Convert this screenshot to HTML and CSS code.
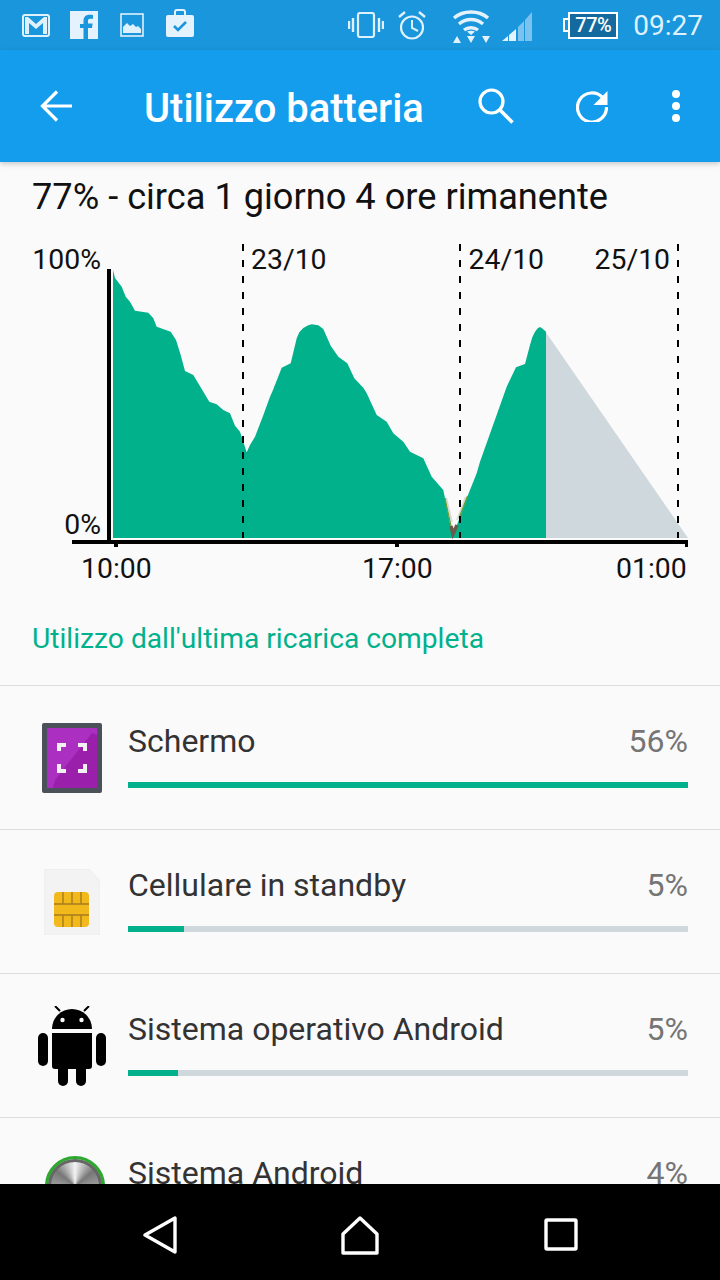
FILE: index.html
```html
<!DOCTYPE html>
<html lang="it">
<head>
    <meta charset="UTF-8">
    <meta name="viewport" content="width=device-width, initial-scale=1.0">
    <title>Utilizzo batteria</title>
    <link rel="stylesheet" href="styles.css">
</head>
<body>
    <div class="screen">
        <div class="status-bar">
            <div class="status-left">
                <svg class="ic-mail" width="28" height="23" viewBox="0 0 28 23"><rect x="1" y="1" width="26" height="21" rx="2" fill="none" stroke="#dff1fc" stroke-width="2"/><path d="M3 3h3l8 7 8-7h3v17h-4V9l-7 6-7-6v11H3z" fill="#dff1fc"/></svg>
                <svg class="ic-fb" width="28" height="28" viewBox="0 0 28 28"><rect width="28" height="28" fill="#e3f2fc"/><path d="M18 28V17h4l.6-4.400H18V10c0-1.300.4-2.200 2.200-2.200H23V4c-.5 0-2-.2-3.600-.2-3.500 0-5.900 2.100-5.900 6v3.200H10V17h3.500v11z" fill="#1a96dc"/></svg>
                <svg class="ic-pic" width="24" height="24" viewBox="0 0 24 24"><rect x="1" y="1" width="22" height="22" fill="none" stroke="#dff1fc" stroke-width="1.600"/><path d="M3 20v-6l4-4 3 3 3-2 3 3 2-1 3 3v4z" fill="#dff1fc"/></svg>
                <svg class="ic-bag" width="28" height="28" viewBox="0 0 28 28"><path d="M2 6h24a2 2 0 0 1 2 2v18a2 2 0 0 1-2 2H2a2 2 0 0 1-2-2V8a2 2 0 0 1 2-2z" fill="#e3f2fc"/><path d="M9 6V3a2 2 0 0 1 2-2h6a2 2 0 0 1 2 2v3" fill="none" stroke="#e3f2fc" stroke-width="2"/><path d="M8 17l4 4 8-8" fill="none" stroke="#1a96dc" stroke-width="2.600"/></svg>
            </div>
            <div class="status-right">
                <svg class="ic-vib" width="36" height="26" viewBox="0 0 36 26"><rect x="10" y="1" width="16" height="24" rx="2" fill="none" stroke="#dff1fc" stroke-width="2.200"/><path d="M5 6v14M1 9v8M31 6v14M35 9v8" stroke="#dff1fc" stroke-width="2.400"/></svg>
                <svg class="ic-alarm" width="28" height="29" viewBox="0 0 28 29"><circle cx="14" cy="16.500" r="11" fill="none" stroke="#dff1fc" stroke-width="2.200"/><path d="M14 9v8l6 3" fill="none" stroke="#dff1fc" stroke-width="2"/><path d="M1 6l6-5M27 6l-6-5" stroke="#dff1fc" stroke-width="2.400"/></svg>
                <svg class="ic-wifi" width="38" height="33" viewBox="0 0 38 33"><g fill="none" stroke="#e3f2fc" stroke-width="3.400"><path d="M2 8C11 0 27 0 36 8"/><path d="M7 14C14 8 24 8 31 14"/><path d="M12 20c4-3 10-3 14 0"/></g><path d="M15 21.500c2.500-1 5.500-1 8 0l-4 3.500zM1 33l4-7 4 7zM15 26h8l-4 7zM30 26h8l-4 7z" fill="#e3f2fc"/></svg>
                <svg class="ic-signal" width="30" height="29" viewBox="0 0 30 29"><path d="M0 29l6-5v5zM7 23l7-6v12H7z" fill="#e3f2fc"/><path d="M16 15l6-6v20h-6zM23 8l7-8v29h-7z" fill="#7cc2ee"/></svg>
                <div class="battery"><span class="battery-cap"></span><span class="battery-body">77%</span></div>
                <span class="clock">09:27</span>
            </div>
        </div>

        <header class="toolbar">
            <button class="tool-btn nav-btn" type="button"><svg width="32" height="32" viewBox="0 0 32 32"><path d="M32 16H3M17 1.500L2.500 16 17 30.500" fill="none" stroke="#fff" stroke-width="3.200"/></svg></button>
            <h1 class="title">Utilizzo batteria</h1>
            <button class="tool-btn" type="button"><svg width="36" height="36" viewBox="0 0 36 36"><circle cx="13.500" cy="13.500" r="11.500" fill="none" stroke="#fff" stroke-width="3.200"/><path d="M22 22l12.500 12.500" stroke="#fff" stroke-width="3.600"/></svg></button>
            <button class="tool-btn" type="button"><svg width="32" height="32" viewBox="0 0 32 32"><path d="M27 8A14.500 14.500 0 1 0 30.500 17" fill="none" stroke="#fff" stroke-width="3.200"/><path d="M31.500 1v14h-14z" fill="#fff"/></svg></button>
            <button class="tool-btn more-btn" type="button"><span class="dots"><i></i><i></i><i></i></span></button>
        </header>

        <main class="content">
            <p class="summary">77% - circa 1 giorno 4 ore rimanente</p>

            <svg class="chart" width="720" height="370" viewBox="0 232 720 370">
                <polygon fill="#cfd8dc" points="545,331 688,538 545,538"/>
                <polygon fill="#00b18c" points="113,270 115,278 121.700,286.700 125.700,296.700 130,301.700 135,310.700 148.300,312.700 153.300,318.300 156.700,326.700 170.700,331.700 176,340 180.700,355 185,371 193.300,375 201.700,389 209.300,401.700 216.700,404.300 223.300,410 230,413.300 235,425.700 240,431.700 246.700,452.300 250,445 255,436.700 263,416 270,396.700 273,390 281.700,367.700 290.700,363.300 296.700,338.300 299.300,332.300 303.300,328 308.300,325.300 311.700,324.300 318.300,325.300 323.300,329 326.700,336.700 330.700,345.700 338.300,356.700 347.300,363.300 354.300,378.300 363.300,387.700 366.700,393.300 376.700,415 386.700,421.700 393.300,433.300 403.300,441.700 410,451.700 423.300,458.300 431.700,476.700 443.300,490 445,498.300 452.700,536.700 467.300,496.700 476.700,473.300 480,461.700 506.700,386.700 516,367.300 525,364 530,345 532.300,337.300 535,331.700 537.700,328.300 540,327 542.700,328.700 546,331.700 546,538 113,538"/>
                <g fill="none">
                    <path d="M446.500 498L452 522" stroke="#d8d8d8" stroke-width="1.500"/>
                    <path d="M465.500 497L457 520" stroke="#d8d8d8" stroke-width="1.500"/>
                    <path d="M445 498L451 526" stroke="#6f9a2e" stroke-width="1.200"/>
                    <path d="M467.500 496L459 518" stroke="#6f9a2e" stroke-width="1.200"/>
                    <path d="M451 526L453 534L457 525" stroke="#6b5a4a" stroke-width="3.500"/>
                </g>
                <g class="dash">
                    <line x1="243" y1="244" x2="243" y2="538"/>
                    <line x1="460" y1="244" x2="460" y2="538"/>
                    <line x1="678" y1="244" x2="678" y2="538"/>
                </g>
                <rect x="107" y="269" width="4" height="275"/>
                <rect x="72" y="540" width="616" height="4"/>
                <rect x="114" y="544" width="4" height="3"/>
                <rect x="395" y="544" width="4" height="3"/>
                <rect x="685" y="544" width="3" height="3"/>
                <text x="101" y="269" text-anchor="end">100%</text>
                <text x="101" y="534" text-anchor="end">0%</text>
                <text x="251" y="269">23/10</text>
                <text x="468.500" y="269">24/10</text>
                <text x="594.500" y="269">25/10</text>
                <text x="81" y="578">10:00</text>
                <text x="362" y="578">17:00</text>
                <text x="616" y="578">01:00</text>
            </svg>

            <h2 class="section-title">Utilizzo dall'ultima ricarica completa</h2>

            <ul class="usage-list">
                <li class="usage-row">
                    <div class="usage-icon">
                        <svg width="60" height="70" viewBox="0 0 60 70">
                            <rect width="60" height="70" rx="2" fill="#4b5159"/>
                            <rect x="5" y="5" width="50" height="60" fill="#ab30c2"/>
                            <path d="M55 12l-5-2L13 57l-2 8h44z" fill="#9a1fab"/>
                            <path d="M17 28v-6h7M43 28v-6h-7M17 41v7h7M43 41v7h-7" fill="none" stroke="#f3f0f4" stroke-width="4"/>
                        </svg>
                    </div>
                    <div class="usage-info">
                        <div class="usage-line"><span>Schermo</span><span class="pct">56%</span></div>
                        <div class="track"><div class="fill" style="width: 100%"></div></div>
                    </div>
                </li>
                <li class="usage-row">
                    <div class="usage-icon">
                        <svg width="56" height="66" viewBox="0 0 56 66">
                            <path d="M0 0h45l11 12v54H0z" fill="#f3f3f3" stroke="#ececec"/>
                            <rect x="10" y="23" width="35" height="35" rx="4" fill="#f2b91c"/>
                            <path d="M19 23v12M28 23v12M37 23v12M19 46v12M28 46v12M37 46v12M10 35h35M10 46h35" fill="none" stroke="#a77c1c" stroke-width="1.400"/>
                        </svg>
                    </div>
                    <div class="usage-info">
                        <div class="usage-line"><span>Cellulare in standby</span><span class="pct">5%</span></div>
                        <div class="track"><div class="fill" style="width: 10%"></div></div>
                    </div>
                </li>
                <li class="usage-row">
                    <div class="usage-icon">
                        <svg width="68" height="80" viewBox="0 0 68 80">
                            <path d="M14 23a20 20 0 0 1 40 0z" fill="#000"/>
                            <path d="M22 5l-5-5M46 5l5-5" stroke="#000" stroke-width="2"/>
                            <circle cx="24.500" cy="14" r="2.200" fill="#fafafa"/>
                            <circle cx="43.500" cy="14" r="2.200" fill="#fafafa"/>
                            <path d="M14 27h40v33a3 3 0 0 1-3 3H17a3 3 0 0 1-3-3z" fill="#000"/>
                            <rect y="27" width="10" height="33" rx="5" fill="#000"/>
                            <rect x="58" y="27" width="10" height="33" rx="5" fill="#000"/>
                            <rect x="20" y="55" width="10" height="25" rx="5" fill="#000"/>
                            <rect x="38" y="55" width="10" height="25" rx="5" fill="#000"/>
                        </svg>
                    </div>
                    <div class="usage-info">
                        <div class="usage-line"><span>Sistema operativo Android</span><span class="pct">5%</span></div>
                        <div class="track"><div class="fill" style="width: 9%"></div></div>
                    </div>
                </li>
                <li class="usage-row">
                    <div class="usage-icon"><div class="knob"></div></div>
                    <div class="usage-info">
                        <div class="usage-line"><span>Sistema Android</span><span class="pct">4%</span></div>
                        <div class="track"><div class="fill" style="width: 8%"></div></div>
                    </div>
                </li>
            </ul>
        </main>

        <nav class="nav-bar">
            <svg width="36" height="38" viewBox="0 0 36 38"><path d="M3 19L33 2v34z" fill="none" stroke="#fff" stroke-width="3.400" stroke-linejoin="round"/></svg>
            <svg width="40" height="40" viewBox="0 0 40 40"><path d="M20 3l17 16v19H3V19z" fill="none" stroke="#fff" stroke-width="3.400" stroke-linejoin="round"/></svg>
            <svg class="nav-square" width="34" height="34" viewBox="0 0 34 34"><rect x="2" y="2" width="30" height="29" rx="1" fill="none" stroke="#fff" stroke-width="3.400"/></svg>
        </nav>
    </div>
</body>
</html>
```

FILE: styles.css
```css
* {
    box-sizing: border-box;
}

body {
    margin: 0;
    font-family: Roboto, "Noto Sans", sans-serif;
    background-color: #FAFAFA;
}

.screen {
    display: flex;
    flex-direction: column;
    width: 720px;
    height: 1280px;
    overflow: hidden;
}

/* status bar */
.status-bar {
    display: flex;
    flex: none;
    justify-content: space-between;
    align-items: center;
    height: 50px;
    padding: 0 17px 0 22px;
    background-color: #1A96DC;
}

.status-left,
.status-right {
    display: flex;
    align-items: center;
}

.status-left svg {
    display: block;
}

.ic-fb { margin-left: 20px; }
.ic-pic { margin-left: 22px; }
.ic-bag { margin: -4px 0 0 22px; }
.ic-alarm { margin-left: 14px; }
.ic-wifi { margin: 2px 0 0 26px; }
.ic-signal { margin: 3px 0 0 12px; }

.battery {
    display: flex;
    align-items: center;
    margin-left: 31px;
}

.battery-cap {
    width: 5px;
    height: 14px;
    border: 2px solid #FFFFFF;
    border-right: none;
}

.battery-body {
    width: 50px;
    height: 27px;
    border: 2px solid #FFFFFF;
    background-color: #146A9E;
    color: #FFFFFF;
    font-size: 20px;
    font-weight: 500;
    letter-spacing: -0.5px;
    line-height: 23px;
    text-align: center;
}

.clock {
    margin-left: 15px;
    color: #DFF1FC;
    font-size: 28px;
}

/* toolbar */
.toolbar {
    position: relative;
    z-index: 2;
    display: flex;
    flex: none;
    align-items: center;
    height: 112px;
    padding-right: 8px;
    background-color: #159DED;
    box-shadow: 0 2px 5px rgba(0, 0, 0, 0.2);
}

.tool-btn {
    display: flex;
    justify-content: center;
    align-items: center;
    width: 96px;
    height: 112px;
    padding: 0;
    border: none;
    background: none;
}

.nav-btn {
    width: 112px;
}

.more-btn {
    width: 72px;
}

.title {
    flex: 1;
    margin: 0;
    padding: 5px 0 0 32px;
    color: #FFFFFF;
    font-size: 39.900px;
    font-weight: 500;
}

.dots {
    display: flex;
    flex-direction: column;
    gap: 4px;
}

.dots i {
    width: 8px;
    height: 8px;
    border-radius: 50%;
    background-color: #FFFFFF;
}

/* content */
.content {
    flex: 1;
    min-height: 0;
    overflow: hidden;
}

.summary {
    height: 70px;
    margin: 0;
    padding: 15px 32px 0;
    color: #111111;
    font-size: 36.200px;
    line-height: 40px;
}

.chart {
    display: block;
}

.chart text {
    font-size: 28.400px;
    fill: #111111;
}

.dash line {
    stroke: #000000;
    stroke-width: 2;
    stroke-dasharray: 7 9;
}

.section-title {
    height: 83px;
    margin: 0;
    padding: 19px 32px 0;
    color: #00B18C;
    font-size: 28.200px;
    font-weight: 400;
    line-height: 36px;
}

.usage-list {
    margin: 0;
    padding: 0;
    list-style: none;
}

.usage-row {
    display: flex;
    align-items: center;
    height: 144px;
    padding: 0 32px;
    border-top: 1px solid #DDDDDD;
}

.usage-icon {
    display: flex;
    flex: none;
    justify-content: center;
    width: 80px;
    margin-right: 16px;
}

.usage-icon svg {
    display: block;
}

.usage-info {
    flex: 1;
    align-self: flex-start;
    padding-top: 36px;
}

.usage-line {
    display: flex;
    justify-content: space-between;
    margin-bottom: 22px;
    color: #333333;
    font-size: 32px;
    line-height: 38px;
}

.pct {
    color: #757575;
}

.track {
    height: 6px;
    background-color: #CFD8DC;
}

.fill {
    height: 100%;
    background-color: #00B18C;
}

.knob {
    width: 60px;
    height: 60px;
    margin: -8px 0 0 6px;
    border: 3px solid #2FA82F;
    border-radius: 50%;
    background: conic-gradient(#F4F4F4, #777777 50deg, #BBBBBB 120deg, #555555 180deg, #BBBBBB 240deg, #777777 310deg, #F4F4F4);
    box-shadow: inset 0 0 0 3px #666666;
}

/* bottom navigation */
.nav-bar {
    position: relative;
    z-index: 2;
    display: grid;
    flex: none;
    grid-template-columns: repeat(3, 200px);
    justify-content: center;
    justify-items: center;
    align-items: center;
    height: 96px;
    padding-top: 5px;
    background-color: #000000;
}

.nav-square {
    margin-left: 1px;
}
```
